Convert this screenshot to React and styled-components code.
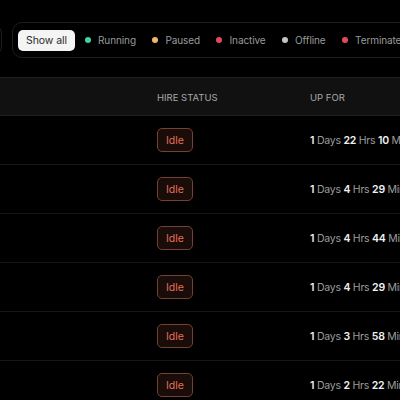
import React from 'react';
import styled, { createGlobalStyle } from 'styled-components';

const GlobalStyle = createGlobalStyle`
  html, body {
    margin: 0;
    padding: 0;
    background: #000;
    overflow: hidden;
  }
  body {
    font-family: Inter, "Noto Sans", "Liberation Sans", sans-serif;
    color: #e5e5e5;
  }
`;

const Page = styled.div`
  width: 400px;
  height: 400px;
  overflow: hidden;
  background: #000;
`;

const Toolbar = styled.div`
  display: flex;
  align-items: center;
  gap: 10px;
  padding-top: 22px;
  width: 900px;
`;

const SearchBox = styled.div`
  width: 60px;
  height: 30px;
  margin-left: -58px;
  border: 1px solid #1f1f1f;
  border-radius: 8px;
  box-sizing: border-box;
`;

const FilterBar = styled.div`
  display: flex;
  align-items: center;
  height: 36px;
  box-sizing: border-box;
  padding: 0 5px;
  border: 1px solid #1d1d1d;
  border-radius: 10px;
`;

const ShowAll = styled.button`
  width: 57px;
  height: 21px;
  padding: 0;
  border: none;
  border-radius: 5px;
  background: #f4f4f4;
  color: #2a2a2a;
  font-family: inherit;
  font-size: 10.5px;
  letter-spacing: -0.1px;
  margin-right: 10px;
`;

const Filter = styled.div`
  display: flex;
  align-items: center;
  gap: 7px;
  margin-right: 16.5px;
  font-size: 10px;
  letter-spacing: -0.1px;
  color: #9a9a9a;
`;

const Dot = styled.span`
  width: 6px;
  height: 6px;
  border-radius: 50%;
  background: ${p => p.$color};
`;

const Table = styled.div`
  margin-top: 19px;
`;

const Grid = styled.div`
  display: grid;
  grid-template-columns: 157px 153px 1fr;
  align-items: center;
  white-space: nowrap;
`;

const HeaderRow = styled(Grid)`
  height: 39px;
  box-sizing: border-box;
  background: #111;
  border-top: 1px solid #202020;
  border-bottom: 1px solid #202020;
  font-size: 9.5px;
  color: #a8a8a8;
  text-transform: uppercase;
  padding-top: 1px;
`;

const Row = styled(Grid)`
  height: 49px;
  box-sizing: border-box;
  border-bottom: 1px solid #161616;
`;

const Badge = styled.span`
  display: inline-flex;
  align-items: center;
  justify-content: center;
  width: 36px;
  height: 24px;
  box-sizing: border-box;
  border: 1px solid #744032;
  border-radius: 5px;
  background: #1a0c08;
  color: #e2705a;
  font-size: 10.5px;
`;

const UpFor = styled.span`
  font-size: 10.5px;
  letter-spacing: -0.25px;
  color: #9c9c9c;
  b {
    color: #f0f0f0;
    font-weight: 600;
  }
`;

const filters = [
  { label: 'Running', color: '#3fd4a0' },
  { label: 'Paused', color: '#f0b56a' },
  { label: 'Inactive', color: '#e5495e' },
  { label: 'Offline', color: '#c4c4c4' },
  { label: 'Terminated', color: '#e5495e' },
];

const rows = [
  [1, 22, 10],
  [1, 4, 29],
  [1, 4, 44],
  [1, 4, 29],
  [1, 3, 58],
  [1, 2, 22],
];

export default function App() {
  return (
    <Page>
      <GlobalStyle />
      <Toolbar>
        <SearchBox />
        <FilterBar>
          <ShowAll>Show all</ShowAll>
          {filters.map(f => (
            <Filter key={f.label}>
              <Dot $color={f.color} />
              {f.label}
            </Filter>
          ))}
        </FilterBar>
      </Toolbar>
      <Table>
        <HeaderRow>
          <span />
          <span>Hire Status</span>
          <span>Up For</span>
        </HeaderRow>
        {rows.map(([d, h, m], i) => (
          <Row key={i}>
            <span />
            <span><Badge>Idle</Badge></span>
            <UpFor>
              <b>{d}</b> Days <b>{h}</b> Hrs <b>{m}</b> Mins
            </UpFor>
          </Row>
        ))}
      </Table>
    </Page>
  );
}
